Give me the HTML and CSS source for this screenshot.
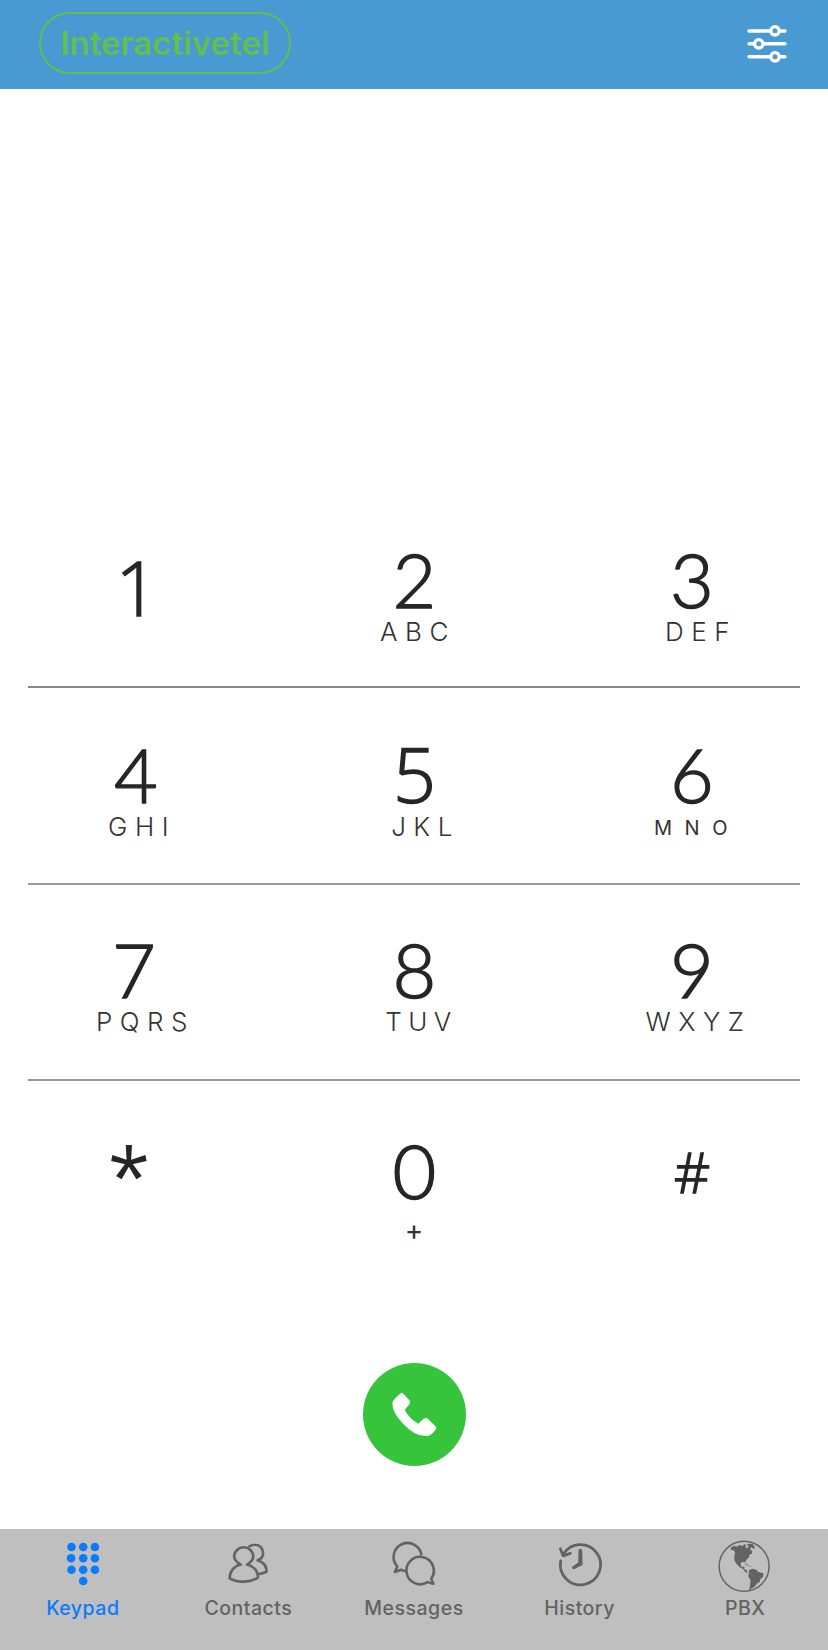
FILE: index.html
```html
<!doctype html>
<html lang="en">
	<head>
		<meta charset="utf-8">
		<title>Keypad</title>
		<link rel="stylesheet" href="styles.css">
	</head>
	<body>

		<header class="topbar">
			<div class="account">Interactivetel</div>
			<svg class="settings" width="40" height="40" viewBox="0 0 40 40">
				<path d="M2 7h36M2 19.8h36M2 32.8h36"/>
				<circle cx="28" cy="6.8" r="4.2"/>
				<circle cx="11.8" cy="19.8" r="4.2"/>
				<circle cx="28" cy="32.8" r="4.2"/>
			</svg>
		</header>

		<main class="dialer">
			<div class="row">
				<div class="key key-1"><span class="digit">1</span></div>
				<div class="key key-2"><span class="digit">2</span><span class="letters">ABC</span></div>
				<div class="key key-3"><span class="digit">3</span><span class="letters">DEF</span></div>
			</div>
			<div class="row">
				<div class="key key-4"><span class="digit">4</span><span class="letters">GHI</span></div>
				<div class="key key-5"><span class="digit">5</span><span class="letters">JKL</span></div>
				<div class="key key-6"><span class="digit">6</span><span class="letters">MNO</span></div>
			</div>
			<div class="row">
				<div class="key key-7"><span class="digit">7</span><span class="letters">PQRS</span></div>
				<div class="key key-8"><span class="digit">8</span><span class="letters">TUV</span></div>
				<div class="key key-9"><span class="digit">9</span><span class="letters">WXYZ</span></div>
			</div>
			<div class="row">
				<div class="key key-star"><span class="digit">*</span></div>
				<div class="key key-0"><span class="digit">0</span><span class="letters">+</span></div>
				<div class="key key-hash"><span class="digit">#</span></div>
			</div>

			<div class="call">
				<svg width="103" height="103" viewBox="39 39 309 309">
					<path d="M127 158Q128 150 150 131q6-5 11 1l17 19q5 6 0 12l-14 17Q178 206 205 221l14-13q8-7 15-1l21 20q7 7 1 13Q243 258 230 258Q195 260 160 222Q126 187 127 158Z"/>
				</svg>
			</div>
		</main>

		<nav class="tabs">
			<a class="tab active">
				<svg class="icon solid" viewBox="0 0 56 56">
					<circle cx="16.5" cy="9" r="4.3"/><circle cx="28.2" cy="9" r="4.3"/><circle cx="39.9" cy="9" r="4.3"/>
					<circle cx="16.1" cy="20.2" r="4.3"/><circle cx="28.2" cy="20.2" r="4.3"/><circle cx="39.9" cy="20.2" r="4.3"/>
					<circle cx="16.5" cy="31.8" r="4.3"/><circle cx="28.2" cy="31.8" r="4.3"/><circle cx="39.9" cy="31.8" r="4.3"/>
					<circle cx="28.2" cy="43" r="4.3"/>
				</svg>
				Keypad
			</a>
			<a class="tab">
				<svg class="icon" viewBox="0 0 56 56">
					<path d="M20.8 26.6C17 24.6 14.2 22.5 14.2 18.6a9.5 9.3 0 0 1 19 0c0 3.9-2.6 6-6.2 8C32 28 35 30 36.6 33.400c1.200 2.600 1.300 4 1.300 6.300C30 44.800 17 44.800 9.600 40.300C9.700 33.500 14 28 20.800 26.600Z"/>
					<path d="M28.6 9C30.5 7 33 6.6 35 6.7c5 .1 8.3 3.9 8.1 8.7c-.1 3.2-2 5.800-5.500 6.900c5 1.500 9 5.200 9 11.400c-2.400 1.500-5 2-8.600 2.600"/>
				</svg>
				Contacts
			</a>
			<a class="tab">
				<svg class="icon" viewBox="0 0 56 56">
					<path d="M20.6 33.2c-2.3-.1-4-.7-5.5-1.5l-6.2 2.3l2.4-5.7A14 13.9 0 1 1 35.5 17.3"/>
					<path d="M45.3 40.5A13.7 13.7 0 1 0 41.5 44.1c2 .8 4 1.3 6 1.5c-1.2-1.3-1.9-3.2-2.2-5.1Z"/>
				</svg>
				Messages
			</a>
			<a class="tab">
				<svg class="icon" viewBox="0 0 56 56">
					<path class="heavy" d="M8.7 23A20.1 20.1 0 1 0 11.2 16.4"/>
					<path class="heavy" d="M8.3 10.8l2.9 7l7.2-2.4"/>
					<path class="hands" d="M26.5 11.6q1.8-1.4 3.6 0L30.6 27L22 31.3q-2.4-.4-1.8-2.6l6-4.1Z"/>
				</svg>
				History
			</a>
			<a class="tab">
				<svg class="icon" viewBox="909.6 54 168 168">
					<circle class="globe" cx="991" cy="139" r="75"/>
					<path class="land" d="M950 83l12-6l6 3l10-5l8 3l5-5l6 1l-2 8l5 3l5-5l-5-5l3-4l14 1l6 9l-3 6l-8-6l-3 6l7 8l-2 7l-7 1l-1 9l-6 5l-5 7l1 7l-4-5l-9 1l-3 7l4 8l8-3l-1 8l8 4l3 7l-8-2l-6-9l-10-5l-9-9l-6-9l-2-13l3-13l-5-8l-7 1Z"/>
					<path class="land" d="M1005 151l11-5l13 4l4 6l16 4l-2 12l-7 5l-3 10l-9 4l-5 9l-11 6l-7 7l4-17l1-16l-7-12l3-9Z"/>
					<path class="land" d="M992 131l9 2l5 4l-6-1ZM1006 138l9 2l-7 1Z"/>
				</svg>
				PBX
			</a>
		</nav>

	</body>
</html>
```

FILE: styles.css
```css
* {
	box-sizing: border-box;
}

body {
	margin: 0;
	height: 1650px;
	display: flex;
	flex-direction: column;
	background: #fff;
	color: #262626;
	font-family: Inter, "Liberation Sans", sans-serif;
}

.topbar {
	height: 89px;
	padding: 12px 41px 0 39px;
	display: flex;
	align-items: flex-start;
	justify-content: space-between;
	background: #4999d3;
}

.account {
	width: 252px;
	height: 62px;
	border: 2px solid #62bf50;
	border-radius: 31px;
	color: #62bf50;
	font-size: 33px;
	font-weight: 600;
	line-height: 58px;
	text-align: center;
}

.settings {
	margin-top: 12px;
	fill: #4999d3;
	stroke: #fff;
	stroke-width: 3.4;
	stroke-linecap: round;
}

.dialer {
	flex: 1;
	padding-top: 404px;
}

.row {
	height: 196px;
	margin: 0 28px;
	padding: 48px 0 0;
	display: grid;
	grid-template-columns: 220px 1fr 220px;
	border-bottom: 2px solid #999;
}
.row:nth-child(1) {
	height: 195px;
	border-color: #888;
}
.row:nth-child(2) {
	height: 197px;
}
.row:nth-child(3) {
	padding-top: 46px;
}
.row:nth-child(4) {
	padding-top: 51px;
	height: 282px;
	border: none;
}

.key {
	display: flex;
	flex-direction: column;
	align-items: center;
}

.digit {
	margin-left: 1px;
	font-family: Lato, sans-serif;
	font-weight: 300;
	font-size: 75.5px;
	line-height: 76px;
	-webkit-text-stroke: 1.4px #262626;
}
.key:last-child .digit {
	margin-left: 4px;
}

.letters {
	margin: 2px 0 0 8px;
	color: #333;
	font-size: 26px;
	font-weight: 300;
	line-height: 26px;
	letter-spacing: 7.5px;
}

/* these faces have no foot on the 1 and a five-armed star */
.key-1 .digit,
.key-5 .digit,
.key-star .digit,
.key-hash .digit {
	font-family: "Open Sans", sans-serif;
}
.key-1 .digit {
	margin: 8px 0 0 -2px;
}
.key-3 .letters {
	margin-left: 22px;
}
.key-4 .digit {
	margin-left: -4px;
}
.key-5 .letters {
	margin-left: 23px;
}
.key-6 .letters {
	margin-top: 3px;
	margin-left: 14px;
	font-size: 20px;
	font-weight: 400;
	letter-spacing: 12.5px;
}
.key-7 .digit {
	margin-left: -8px;
}
.key-7 .letters {
	margin-left: 15px;
}
.key-8 .letters {
	margin-left: 15px;
	letter-spacing: 6.5px;
}
.key-9 .letters {
	margin-left: 17px;
}
.key-star .digit {
	margin: 5px 0 0 -18px;
	-webkit-text-stroke-width: 2px;
}
.key-hash .digit {
	margin-top: 1px;
	font-size: 56px;
}
.key-0 .letters {
	margin: 9px 0 0;
	font-size: 28px;
	font-weight: 400;
	letter-spacing: 0;
}

.call {
	width: 103px;
	height: 103px;
	margin: 0 auto;
	border-radius: 50%;
	background: #36c43d;
}
.call svg {
	display: block;
	fill: #fff;
}

.tabs {
	height: 121px;
	padding-top: 9px;
	display: flex;
	background: #bfbfbf;
}

.tab {
	flex: 1;
	display: flex;
	flex-direction: column;
	align-items: center;
	color: #636363;
	font-size: 19.5px;
	font-weight: 500;
	line-height: 28px;
	letter-spacing: 0.5px;
}
.tab.active {
	color: #0a7aff;
}

.icon {
	width: 56px;
	height: 56px;
	fill: none;
	stroke: currentColor;
	stroke-width: 2.6;
	stroke-linejoin: round;
}
.icon.solid,
.icon .hands {
	fill: currentColor;
	stroke: none;
}
.icon .heavy {
	stroke-width: 2.8;
	stroke-linecap: round;
}
.icon .globe {
	stroke-width: 4.5;
}
.icon .land {
	fill: currentColor;
	stroke: none;
}
```
